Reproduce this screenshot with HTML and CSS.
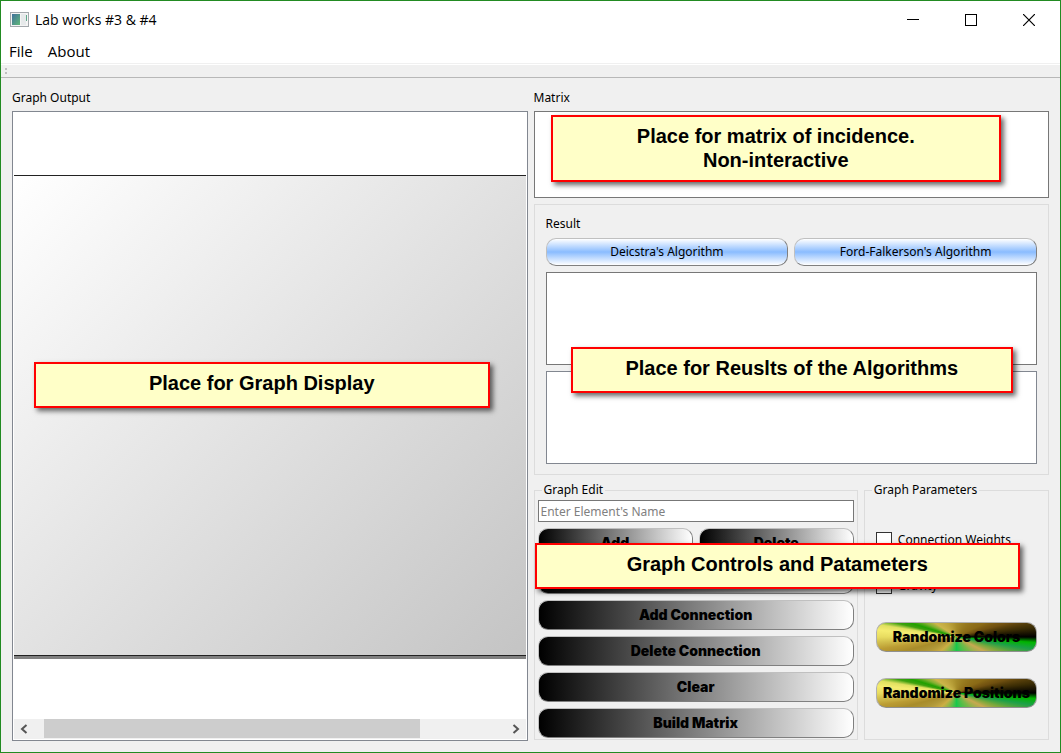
FILE: index.html
```html
<!DOCTYPE html>
<html lang="en">
<head>
<meta charset="utf-8">
<title>Lab works #3 &amp; #4</title>
<link rel="stylesheet" href="styles.css">
</head>
<body>
<div class="window">
  <header class="titlebar">
    <svg class="app-icon" width="20" height="16" viewBox="0 0 20 16" aria-hidden="true">
      <defs>
        <linearGradient id="pane" x1="0" y1="0" x2="1" y2="1">
          <stop offset="0" stop-color="#41719c"/>
          <stop offset="1" stop-color="#5fb878"/>
        </linearGradient>
      </defs>
      <rect x="0.5" y="0.5" width="18" height="14" fill="#f4f4f4" stroke="#a3a8ac"/>
      <rect x="2" y="2" width="8" height="11" fill="url(#pane)"/>
      <rect x="11" y="2" width="5" height="11" fill="#e6e9ea"/>
      <rect x="16" y="3" width="1" height="6" fill="#5fa88a"/>
    </svg>
    <h1 class="title">Lab works #3 &amp; #4</h1>
    <div class="window-controls">
      <button class="window-button" type="button" aria-label="Minimize">
        <svg width="12" height="12" viewBox="0 0 12 12"><path d="M0 5.5H12" stroke="#000"/></svg>
      </button>
      <button class="window-button" type="button" aria-label="Maximize">
        <svg width="12" height="12" viewBox="0 0 12 12"><rect x="0.5" y="0.5" width="11" height="11" fill="none" stroke="#000"/></svg>
      </button>
      <button class="window-button" type="button" aria-label="Close">
        <svg width="12" height="12" viewBox="0 0 12 12"><path d="M0 0L12 12M12 0L0 12" stroke="#000" stroke-width="1.2"/></svg>
      </button>
    </div>
  </header>
  <nav class="menubar">
    <button class="menu" type="button">File</button>
    <button class="menu" type="button">About</button>
  </nav>
  <div class="toolbar"><span class="grip"></span></div>

  <main class="content">
    <section class="column">
      <h2 class="caption">Graph Output</h2>
      <div class="graph-view">
        <div class="viewport">
          <div class="scene"></div>
        </div>
        <div class="scrollbar">
          <button class="arrow" type="button" aria-label="Scroll left">
            <svg width="8" height="10" viewBox="0 0 8 10"><path d="M6.5 1L2 5L6.5 9" fill="none" stroke="#555" stroke-width="2"/></svg>
          </button>
          <div class="track"><div class="thumb"></div></div>
          <button class="arrow" type="button" aria-label="Scroll right">
            <svg width="8" height="10" viewBox="0 0 8 10"><path d="M1.5 1L6 5L1.5 9" fill="none" stroke="#555" stroke-width="2"/></svg>
          </button>
        </div>
        <p class="note note-graph">Place for Graph Display</p>
      </div>
    </section>

    <section class="column">
      <h2 class="caption">Matrix</h2>
      <div class="matrix">
        <p class="note note-matrix">Place for matrix of incidence.<br>Non-interactive</p>
      </div>

      <div class="results">
        <h2 class="result-caption">Result</h2>
        <div class="pair">
          <button class="btn btn-blue" type="button">Deicstra's Algorithm</button>
          <button class="btn btn-blue" type="button">Ford-Falkerson's Algorithm</button>
        </div>
        <div class="output"></div>
        <div class="output output-soft"></div>
        <p class="note note-results">Place for Reuslts of the Algorithms</p>
      </div>

      <div class="groups">
        <fieldset class="group group-edit">
          <legend>Graph Edit</legend>
          <div class="edit-items">
            <input class="name-input" type="text" placeholder="Enter Element's Name" aria-label="Element's name">
            <div class="pair">
              <button class="btn btn-dark" type="button">Add</button>
              <button class="btn btn-dark" type="button">Delete</button>
            </div>
            <button class="btn btn-dark" type="button" aria-label="Edit element"></button>
            <button class="btn btn-dark" type="button">Add Connection</button>
            <button class="btn btn-dark" type="button">Delete Connection</button>
            <button class="btn btn-dark" type="button">Clear</button>
            <button class="btn btn-dark" type="button">Build Matrix</button>
          </div>
        </fieldset>
        <fieldset class="group group-params">
          <legend>Graph Parameters</legend>
          <div class="param-items">
            <label class="check"><input type="checkbox">Connection Weights</label>
            <label class="check"><input type="checkbox">Gravity</label>
            <button class="btn btn-color" type="button">Randomize Colors</button>
            <button class="btn btn-color" type="button">Randomize Positions</button>
          </div>
        </fieldset>
        <p class="note note-controls">Graph Controls and Patameters</p>
      </div>
    </section>
  </main>
</div>
</body>
</html>
```
FILE: styles.css
```css
* { box-sizing: border-box; }

body {
  margin: 0;
  font: 12px/16px "Noto Sans", sans-serif;
  color: #000;
}

button, input {
  margin: 0;
  font: inherit;
  color: inherit;
}

.window {
  display: flex;
  flex-direction: column;
  min-height: 100vh;
  border: 1px solid #228b22;
  background: #f0f0f0;
}

/* Title bar and menu */
.titlebar {
  display: flex;
  align-items: center;
  height: 37px;
  padding: 0 2px 0 9px;
  background: #fff;
}

.title {
  flex: 1;
  margin: 0 0 0 5px;
  font: 14px/20px "Open Sans", sans-serif;
}

.window-controls { display: flex; }

.window-button {
  display: flex;
  align-items: center;
  justify-content: center;
  width: 58px;
  height: 36px;
  padding: 0;
  border: 0;
  background: none;
}

.menubar {
  display: flex;
  gap: 15px;
  height: 26px;
  padding: 0 8px;
  border-bottom: 1px solid #f0f0f0;
  background: #fff;
}

.menu {
  padding: 0;
  border: 0;
  background: none;
  font: 15px/20px "Open Sans", sans-serif;
}

.toolbar {
  display: flex;
  align-items: center;
  height: 14px;
  padding-left: 4px;
  border-top: 1px solid #fff;
  border-bottom: 1px solid #b8b8b8;
}

.grip {
  width: 2px;
  height: 6px;
  border-top: 2px solid #c0c0c0;
  border-bottom: 2px solid #c0c0c0;
}

/* Two equal columns */
.content {
  flex: 1;
  display: grid;
  grid-template-columns: 1fr 1fr;
  gap: 6px;
  padding: 12px 11px 11px;
}

.column {
  display: flex;
  flex-direction: column;
  min-width: 0;
}

.caption, .result-caption {
  margin: 0 0 5px;
  font-size: 12px;
  font-weight: 400;
}

/* Graph output */
.graph-view {
  position: relative;
  flex: 1;
  display: flex;
  flex-direction: column;
  padding: 1px;
  border: 1px solid #828790;
  background: #fff;
}

.viewport {
  flex: 1;
  display: flex;
  padding: 62px 0 60px;
}

.scene {
  flex: 1;
  border-top: 1px solid #222;
  border-bottom: 1px solid #222;
  margin-bottom: 3px;
  background: linear-gradient(135deg, #fff, #c4c4c4);
  box-shadow: 0 3px #808080;
}

.scrollbar {
  display: flex;
  height: 20px;
  background: #f0f0f0;
}

.arrow {
  display: flex;
  align-items: center;
  justify-content: center;
  width: 20px;
  padding: 0;
  border: 0;
  background: none;
}

.track {
  flex: 1;
  padding: 0 0 1px 10px;
}

.thumb {
  width: 81.5%;
  height: 100%;
  background: #cdcdcd;
}

/* Matrix and results */
.matrix {
  position: relative;
  height: 87px;
  border: 1px solid #777;
  background: #fff;
}

.results {
  position: relative;
  display: flex;
  flex-direction: column;
  gap: 6px;
  margin-top: 6px;
  padding: 11px 11px 10px;
  border: 1px solid #dcdcdc;
}

.result-caption { margin: 0; }

.output {
  height: 93px;
  border: 1px solid #777;
  background: #fff;
}

.output-soft { border-color: #828790; }

.pair {
  display: grid;
  grid-template-columns: 1fr 1fr;
  gap: 6px;
}

/* Buttons */
.btn {
  height: 30px;
  padding: 0;
  border: 1px solid;
  border-color: #c0c0c0 #808080 #808080 #c0c0c0;
  border-radius: 10px;
  font: 900 14px/16px Inter, sans-serif;
  white-space: nowrap;
}

.btn-blue {
  height: 28px;
  background: linear-gradient(#fff, #8abcff 50%, #fff);
  font: inherit;
}

.btn-dark { background: linear-gradient(90deg, #000, #fff); }

.btn-color {
  border-color: #b0b0b0 #a0a0a0 #909090 #b0b0b0;
  background: conic-gradient(from 90deg,
    #000 0deg, #00b400 4deg, #1ca048 9deg, #78a83c 17deg, #c8a850 27deg,
    #78b848 48deg, #18c84c 90deg, #ccae44 138deg, #b09838 154deg,
    #a88c2a 165deg, #bb9c33 171deg, #d1be4c 176deg, #e8dc60 180deg,
    #f5ec70 185deg, #e0e060 189deg, #40a010 193deg, #20a000 197deg,
    #80b030 204deg, #ccb54a 213deg, #a68c29 270deg, #8a6a16 334deg,
    #705010 345deg, #3a2c04 353deg, #000 360deg);
}

/* Graph edit and parameters */
.groups {
  position: relative;
  flex: 1;
  display: grid;
  grid-template-columns: 324fr 185fr;
  gap: 6px;
  margin: 7px 0 1px;
}

.group {
  min-width: 0;
  margin: 0;
  padding: 0;
  border: 1px solid #dcdcdc;
}

.group legend {
  margin-left: 7px;
  padding: 0 2px;
}

.edit-items, .param-items {
  display: flex;
  flex-direction: column;
}

.edit-items {
  gap: 6px;
  padding: 2px 3px 1px;
}

.name-input {
  width: 100%;
  height: 22px;
  padding: 0 2px;
  border: 1px solid #777;
  background: #fff;
}

.name-input::placeholder { color: #808080; }

.param-items {
  gap: 26px;
  padding: 32px 11px 0;
}

.check {
  display: flex;
  align-items: center;
  gap: 6px;
  height: 20px;
  white-space: nowrap;
}

.check input {
  appearance: none;
  flex: none;
  width: 16px;
  height: 16px;
  border: 1px solid #333;
  background: #fff;
}

/* Callouts laid over the panels */
.note {
  position: absolute;
  margin: 0;
  padding: 7px 0 11px;
  border: 2px solid #f00;
  background: #ffffc8;
  box-shadow: 3px 3px 5px rgba(0, 0, 0, 0.6);
  font: 700 20px/24px "Liberation Sans", Arial, sans-serif;
  text-align: center;
}

.note-graph { top: 250px; left: 21px; right: 37px; }
.note-matrix { top: 3px; left: 16px; right: 47px; padding-bottom: 8px; }
.note-results { top: 142px; left: 36px; right: 35px; }
.note-controls { top: 61px; left: 1px; right: 29px; }
```
